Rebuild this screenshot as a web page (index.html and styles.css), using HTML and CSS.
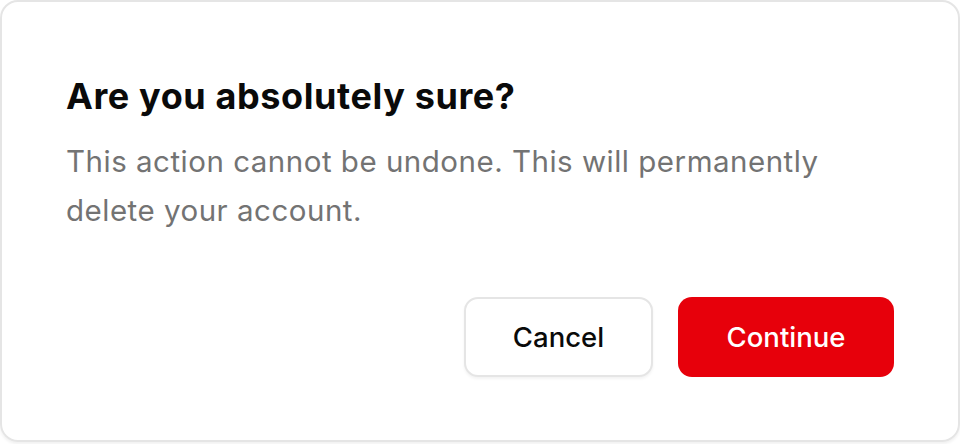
FILE: index.html
```html
<!DOCTYPE html>
<html lang="en">
<head>
<meta charset="utf-8">
<link rel="stylesheet" href="styles.css">
</head>
<body>
<div class="dialog">
  <div class="header">
    <h2 class="title">Are you absolutely sure?</h2>
    <p class="desc">This action cannot be undone. This will permanently delete your account.</p>
  </div>
  <div class="footer">
    <button class="btn btn-outline">Cancel</button>
    <button class="btn btn-danger">Continue</button>
  </div>
</div>
</body>
</html>
```
FILE: styles.css
```css
html, body {
  margin: 0;
  padding: 0;
  background: #ffffff;
}
body {
  font-family: Inter, "Noto Sans", sans-serif;
  width: 960px;
  height: 444px;
  box-sizing: border-box;
}
.dialog {
  box-sizing: border-box;
  width: 960px;
  height: 442px;
  border: 2px solid #e5e5e5;
  border-radius: 18px;
  box-shadow: 0 2px 3px rgba(0,0,0,0.06);
  padding: 70px 64px 63px 64px;
  display: flex;
  flex-direction: column;
}
.header {
  display: flex;
  flex-direction: column;
  gap: 17px;
}
.title {
  margin: 0;
  font-size: 36px;
  line-height: 48px;
  font-weight: 700;
  color: #0a0a0a;
  letter-spacing: 0.6px;
}
.desc {
  margin: 0;
  font-size: 29.5px;
  line-height: 49px;
  color: #737373;
  letter-spacing: 0.5px;
  max-width: 800px;
}
.footer {
  margin-top: auto;
  display: flex;
  justify-content: flex-end;
  gap: 25px;
}
.btn {
  box-sizing: border-box;
  height: 80px;
  border-radius: 14px;
  font-family: inherit;
  font-size: 27.5px;
  font-weight: 500;
  cursor: pointer;
}
.btn-outline {
  width: 189px;
  background: #ffffff;
  border: 2px solid #e5e5e5;
  color: #0a0a0a;
  box-shadow: 0 2px 3px rgba(0,0,0,0.05);
}
.btn-danger {
  width: 216px;
  background: #e7000b;
  border: none;
  color: #ffffff;
}
```
